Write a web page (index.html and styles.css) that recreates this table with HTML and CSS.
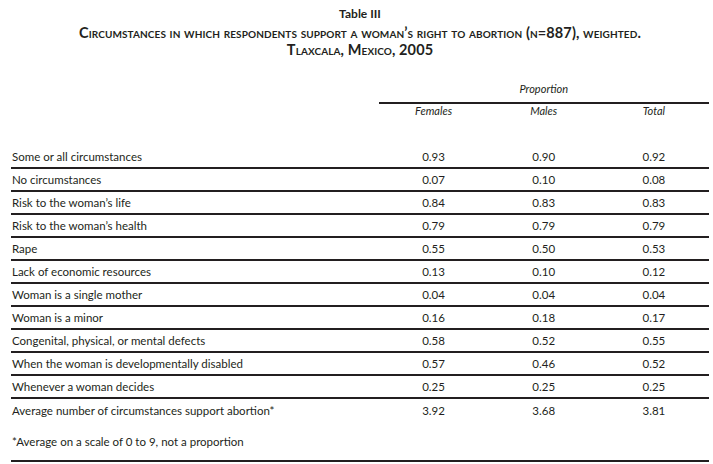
FILE: index.html
```html
<!DOCTYPE html>
<html>
<head>
<meta charset="utf-8">
<link rel="stylesheet" href="styles.css">
</head>
<body>
<div class="page">
  <div class="caption">
    <div class="caption-num">Table III</div>
    <div class="caption-title">Circumstances in which respondents support a woman’s right to abortion (n=887), weighted.<br>Tlaxcala, Mexico, 2005</div>
  </div>
  <table class="data">
    <colgroup>
      <col class="c-label"><col class="c-val"><col class="c-val"><col class="c-val">
    </colgroup>
    <thead>
      <tr class="h-group">
        <th></th>
        <th class="group" colspan="3">Proportion</th>
      </tr>
      <tr class="h-cols">
        <th></th>
        <th>Females</th>
        <th>Males</th>
        <th>Total</th>
      </tr>
    </thead>
    <tbody>
      <tr class="row"><td>Some or all circumstances</td><td>0.93</td><td>0.90</td><td>0.92</td></tr>
      <tr class="row"><td>No circumstances</td><td>0.07</td><td>0.10</td><td>0.08</td></tr>
      <tr class="row"><td>Risk to the woman’s life</td><td>0.84</td><td>0.83</td><td>0.83</td></tr>
      <tr class="row"><td>Risk to the woman’s health</td><td>0.79</td><td>0.79</td><td>0.79</td></tr>
      <tr class="row"><td>Rape</td><td>0.55</td><td>0.50</td><td>0.53</td></tr>
      <tr class="row"><td>Lack of economic resources</td><td>0.13</td><td>0.10</td><td>0.12</td></tr>
      <tr class="row"><td>Woman is a single mother</td><td>0.04</td><td>0.04</td><td>0.04</td></tr>
      <tr class="row"><td>Woman is a minor</td><td>0.16</td><td>0.18</td><td>0.17</td></tr>
      <tr class="row"><td>Congenital, physical, or mental defects</td><td>0.58</td><td>0.52</td><td>0.55</td></tr>
      <tr class="row"><td>When the woman is developmentally disabled</td><td>0.57</td><td>0.46</td><td>0.52</td></tr>
      <tr class="row"><td>Whenever a woman decides</td><td>0.25</td><td>0.25</td><td>0.25</td></tr>
      <tr class="row last"><td>Average number of circumstances support abortion*</td><td>3.92</td><td>3.68</td><td>3.81</td></tr>
    </tbody>
    <tfoot>
      <tr class="foot"><td colspan="4">*Average on a scale of 0 to 9, not a proportion</td></tr>
    </tfoot>
  </table>
</div>
</body>
</html>
```

FILE: styles.css
```css
html, body {
  margin: 0;
  padding: 0;
  background: #ffffff;
}
body {
  font-family: "Lato", "Open Sans", sans-serif;
  color: #231f20;
  font-size: 11.5px;
}
.page {
  padding: 5px 4px 0 11px;
}
.caption {
  text-align: center;
  font-weight: bold;
  color: #231f20;
}
.caption-num {
  font-size: 12px;
  line-height: 17px;
}
.caption-title {
  margin-top: 2px;
  font-size: 14.5px;
  line-height: 17px;
  letter-spacing: 0.1px;
  font-variant: small-caps;
}
.data {
  width: 698px;
  border-collapse: collapse;
  margin-top: 20px;
  table-layout: fixed;
}
.c-label { width: 367px; }
.c-val { width: 110px; }
.data th {
  font-weight: normal;
  font-style: italic;
  text-align: center;
  padding: 0;
  font-size: 11px;
}
.h-group th {
  height: 20px;
  vertical-align: middle;
  padding-bottom: 4px;
}
.h-group th.group {
  border-bottom: 2px solid #231f20;
}
.h-cols th {
  height: 42px;
  vertical-align: top;
  padding-top: 0;
}
.row td {
  height: 21px;
  padding: 0;
  vertical-align: middle;
  border-bottom: 2px solid #231f20;
  text-align: center;
}
.row td:first-child {
  text-align: left;
  padding-left: 1px;
}
.row.last td {
  border-bottom: none;
  height: 23px;
}
.foot td {
  padding: 0 0 0 1px;
  height: 38px;
  vertical-align: middle;
  border-bottom: 2px solid #231f20;
}
```
